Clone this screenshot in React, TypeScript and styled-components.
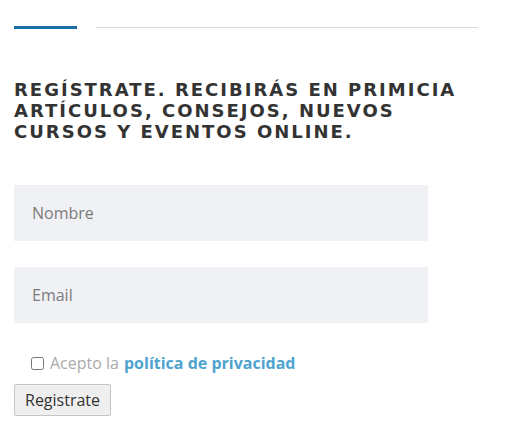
import styled, { createGlobalStyle } from 'styled-components';

const Global = createGlobalStyle`
    body {
        margin: 0;
        background: #fff;
        font-family: "Open Sans", "Liberation Sans", sans-serif;
    }
`;

const Wrapper = styled.section`
    width: 464px;
    padding: 26px 0 0 14px;
`;

const Divider = styled.div`
    display: flex;
    align-items: center;
    gap: 19px;
    height: 3px;
`;

const Accent = styled.span`
    width: 63px;
    height: 3px;
    background: #1d6fa7;
`;

const Rule = styled.span`
    flex: 1;
    height: 1px;
    background: #dcdcdc;
`;

const Title = styled.h2`
    width: 480px;
    margin: 50px 0 0;
    font-family: "DejaVu Sans", sans-serif;
    font-weight: 700;
    font-size: 18px;
    line-height: 21px;
    letter-spacing: 2px;
    color: #333;
    text-transform: uppercase;
`;

const Form = styled.form`
    display: flex;
    flex-direction: column;
    margin-top: 43px;
`;

const Field = styled.input`
    width: 414px;
    height: 56px;
    box-sizing: border-box;
    border: none;
    outline: none;
    background: #f0f1f5;
    padding: 0 18px;
    margin-bottom: 26px;
    font-family: "Open Sans", sans-serif;
    font-size: 16px;
    color: #333;
    &::placeholder { color: #7b7b7b; }
`;

const Consent = styled.label`
    display: flex;
    align-items: center;
    padding-left: 17px;
    margin-top: 3px;
    font-size: 16px;
    color: #aaa;
    input { margin: 0 6px 0 0; width: 13px; height: 13px; }
`;

const Link = styled.a`
    color: #4ea3cf;
    font-weight: 700;
    text-decoration: none;
    margin-left: 5px;
`;

const Submit = styled.button`
    align-self: flex-start;
    margin-top: 10px;
    height: 32px;
    padding: 0 10px;
    border: 1px solid #c4c4c4;
    border-radius: 2px;
    background: #efefef;
    font-family: "Open Sans", sans-serif;
    font-size: 16px;
    color: #333;
`;

export default function App() {
    return (
        <Wrapper>
            <Global />
            <Divider>
                <Accent />
                <Rule />
            </Divider>
            <Title>
                Regístrate. Recibirás en primicia artículos, consejos, nuevos cursos y eventos online.
            </Title>
            <Form onSubmit={e => e.preventDefault()}>
                <Field type="text" placeholder="Nombre" />
                <Field type="email" placeholder="Email" />
                <Consent>
                    <input type="checkbox" />
                    Acepto la<Link href="#">política de privacidad</Link>
                </Consent>
                <Submit type="submit">Registrate</Submit>
            </Form>
        </Wrapper>
    );
}
